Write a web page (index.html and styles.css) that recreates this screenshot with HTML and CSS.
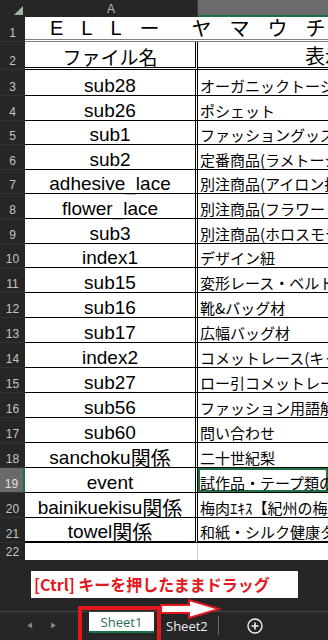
FILE: index.html
```html
<!DOCTYPE html>
<html lang="ja">
<head>
    <meta charset="utf-8">
    <title>Sheet1</title>
    <link rel="stylesheet" href="styles.css">
</head>
<body>
    <div class="sheet">
        <div class="row head">
            <div class="num corner"><span class="tri"></span></div>
            <div class="a">A</div>
            <div class="b selcol"></div>
        </div>
        <div class="row r1">
            <div class="num">1</div>
            <div class="title">
                <span class="lat">E</span><span class="lat">L</span><span class="lat">L</span><span class="dash">ー</span><span>ヤ</span><span>マ</span><span>ウ</span><span>チ</span><span>ー</span>
            </div>
        </div>
        <div class="row r2">
            <div class="num">2</div>
            <div class="a">ファイル名</div>
            <div class="b hdr">表示内容</div>
        </div>
        <div class="row r3"><div class="num">3</div><div class="a">sub28</div><div class="b">オーガニックトーション</div></div>
        <div class="row"><div class="num">4</div><div class="a">sub26</div><div class="b">ポシェット</div></div>
        <div class="row short"><div class="num">5</div><div class="a">sub1</div><div class="b">ファッショングッズ(アクセサリー)</div></div>
        <div class="row"><div class="num">6</div><div class="a">sub2</div><div class="b">定番商品(ラメトーション)</div></div>
        <div class="row short"><div class="num">7</div><div class="a">adhesive_lace</div><div class="b">別注商品(アイロン接着レース)</div></div>
        <div class="row"><div class="num">8</div><div class="a">flower_lace</div><div class="b">別注商品(フラワーレース)</div></div>
        <div class="row"><div class="num">9</div><div class="a">sub3</div><div class="b">別注商品(ホロスモチーフ)</div></div>
        <div class="row short"><div class="num">10</div><div class="a">index1</div><div class="b">デザイン紐</div></div>
        <div class="row"><div class="num">11</div><div class="a">sub15</div><div class="b">変形レース・ベルト</div></div>
        <div class="row"><div class="num">12</div><div class="a">sub16</div><div class="b">靴&amp;バッグ材</div></div>
        <div class="row"><div class="num">13</div><div class="a">sub17</div><div class="b">広幅バッグ材</div></div>
        <div class="row"><div class="num">14</div><div class="a">index2</div><div class="b">コメットレース(キャンディ)</div></div>
        <div class="row"><div class="num">15</div><div class="a">sub27</div><div class="b">ロー引コメットレース</div></div>
        <div class="row"><div class="num">16</div><div class="a">sub56</div><div class="b">ファッション用語解説</div></div>
        <div class="row"><div class="num">17</div><div class="a">sub60</div><div class="b">問い合わせ</div></div>
        <div class="row"><div class="num">18</div><div class="a">sanchoku<span class="jp">関係</span></div><div class="b">二十世紀梨</div></div>
        <div class="row active"><div class="num">19</div><div class="a">event</div><div class="b">試作品・テープ類の</div></div>
        <div class="row"><div class="num">20</div><div class="a">bainikuekisu<span class="jp">関係</span></div><div class="b">梅肉ｴｷｽ【紀州の梅】</div></div>
        <div class="row r21"><div class="num">21</div><div class="a">towel<span class="jp">関係</span></div><div class="b">和紙・シルク健康タオル</div></div>
        <div class="row r22"><div class="num">22</div><div class="a"></div><div class="b"></div></div>
    </div>

    <div class="bottom">
        <div class="filler">
            <div class="note">[Ctrl] キーを押したままドラッグ</div>
        </div>
        <div class="tabs">
            <span class="nav">&#9664;</span>
            <span class="nav">&#9654;</span>
            <span class="tab current">Sheet1</span>
            <span class="tab">Sheet2</span>
            <span class="divider"></span>
            <svg class="plus" width="16" height="16" viewBox="0 0 16 16">
                <circle cx="8" cy="8" r="7" fill="none" stroke="#f0f0f0" stroke-width="1.4"/>
                <path d="M8 4.5v7M4.5 8h7" stroke="#f0f0f0" stroke-width="1.6"/>
            </svg>
        </div>

        <!-- annotation: frame around tab + drag arrow -->
        <div class="frame"></div>
        <svg class="arrow" width="64" height="22" viewBox="0 0 64 22">
            <path d="M2 7 H30 V2 L60 11 L30 20 V15 H2 Z" fill="#fff" stroke="#e3171c" stroke-width="2" stroke-linejoin="miter"/>
        </svg>
    </div>
</body>
</html>
```

FILE: styles.css
```css
body {
    margin: 0;
    padding: 0;
    width: 328px;
    height: 640px;
    overflow: hidden;
    background: #262626;
    font-family: "Liberation Sans", "Noto Sans CJK JP", sans-serif;
}
.sheet {
    background: #fff;
}
.row {
    display: flex;
    height: 25px;
    box-sizing: border-box;
}
.row.short {
    height: 24px;
}
.num {
    width: 25px;
    flex: none;
    box-sizing: border-box;
    background: #262626;
    color: #c4c4c4;
    font-size: 12px;
    line-height: 1;
    display: flex;
    justify-content: center;
    align-items: flex-end;
    padding-bottom: 2px;
    border-bottom: 1px solid #333;
}
.a {
    width: 173px;
    flex: none;
    box-sizing: border-box;
    border-right: 3px double #000;
    border-bottom: 1px solid #000;
    font-size: 19px;
    line-height: 1;
    color: #000;
    display: flex;
    justify-content: center;
    align-items: flex-end;
    white-space: nowrap;
}
.a .jp {
    font-family: "Noto Sans CJK JP", sans-serif;
    font-size: 20px;
    margin-bottom: -1px;
}
.b {
    flex: 1;
    min-width: 0;
    box-sizing: border-box;
    border-bottom: 1px solid #000;
    font-family: "Noto Sans CJK JP", sans-serif;
    font-size: 15px;
    line-height: 1;
    color: #000;
    padding: 0 0 2px 2px;
    display: flex;
    align-items: flex-end;
    white-space: nowrap;
    overflow: hidden;
}

/* column header */
.row.head {
    height: 17px;
}
.head .num {
    border-bottom: none;
    position: relative;
}
.tri {
    position: absolute;
    right: 2px;
    bottom: 2px;
    width: 0;
    height: 0;
    border-left: 9px solid transparent;
    border-bottom: 9px solid #9bb7a2;
}
.head .a {
    background: #262626;
    color: #bdbdbd;
    font-size: 12px;
    border: none;
    border-right: 1px solid #3c3c3c;
    align-items: center;
}
.head .selcol {
    background: #6b6b6b;
    border-bottom: 2px solid #1e7145;
    padding: 0;
}

/* title row */
.r1 .title {
    flex: 1;
    display: flex;
    align-items: flex-end;
    padding: 0 0 1px 25px;
    border-bottom: 3px double #808080;
    font-family: "Noto Sans CJK JP", sans-serif;
    font-size: 20px;
    line-height: 1;
    white-space: nowrap;
    overflow: hidden;
}
.title span {
    margin-right: 18px;
    flex: none;
}
.title .lat {
    font-family: "Liberation Sans", sans-serif;
}
.title .dash {
    margin-right: 32px;
}

.row.r2 {
    height: 28px;
}
.r2 .a,
.r2 .b {
    border-bottom: 3px double #000;
}
.r2 .a {
    font-family: "Noto Sans CJK JP", sans-serif;
    padding-bottom: 1px;
}
.r2 .b.hdr {
    font-size: 20px;
    padding: 0 0 1px 107px;
}
.row.r3 {
    height: 26px;
}

/* selected cell */
.active .num {
    background: #6a6a6a;
    color: #e0e0e0;
    border-right: 2px solid #1e7145;
}
.active .b {
    box-shadow: inset 0 0 0 2px #217346;
}

.r21 .a,
.r21 .b {
    border-bottom: 2px solid #000;
}
.row.r22 {
    height: 17px;
}
.r22 .a {
    border-right: 1px solid #d0d0d0;
    border-bottom: none;
}
.r22 .b {
    border-bottom: none;
}
.r22 .num {
    border-bottom: none;
}

/* bottom area */
.bottom {
    position: relative;
    height: 79px;
}
.filler {
    height: 51px;
    box-sizing: border-box;
    padding: 11px 0 0 31px;
}
.note {
    width: 267px;
    height: 27px;
    box-sizing: border-box;
    background: #fff;
    color: #e3171c;
    font-family: "Noto Sans CJK JP", sans-serif;
    font-weight: bold;
    font-size: 16px;
    line-height: 27px;
    padding-left: 3px;
    white-space: nowrap;
    overflow: hidden;
}
.tabs {
    height: 28px;
    box-sizing: border-box;
    border-top: 1px solid #454545;
    display: flex;
    align-items: center;
    padding-left: 26px;
    font-family: "Open Sans", "Noto Sans", sans-serif;
    font-size: 13px;
}
.nav {
    color: #8a8a8a;
    font-size: 7px;
    width: 8px;
    margin-right: 16px;
}
.tab {
    color: #ececec;
    padding: 0 8px 0 12px;
}
.tab.current {
    background: #fff;
    color: #2f6e50;
    width: 65px;
    height: 21px;
    box-sizing: border-box;
    margin: 0 0 0 15px;
    text-align: center;
    padding: 0;
    line-height: 20px;
    border-bottom: 2px solid #1e7145;
    align-self: flex-start;
}
.divider {
    width: 1px;
    height: 19px;
    background: #6a6a6a;
    margin: 0 28px 0 2px;
}
.plus {
    display: block;
}
.frame {
    position: absolute;
    left: 78px;
    top: 46px;
    width: 83px;
    height: 40px;
    box-sizing: border-box;
    border: 4px solid #e3171c;
}
.arrow {
    position: absolute;
    left: 159px;
    top: 38px;
}
```
